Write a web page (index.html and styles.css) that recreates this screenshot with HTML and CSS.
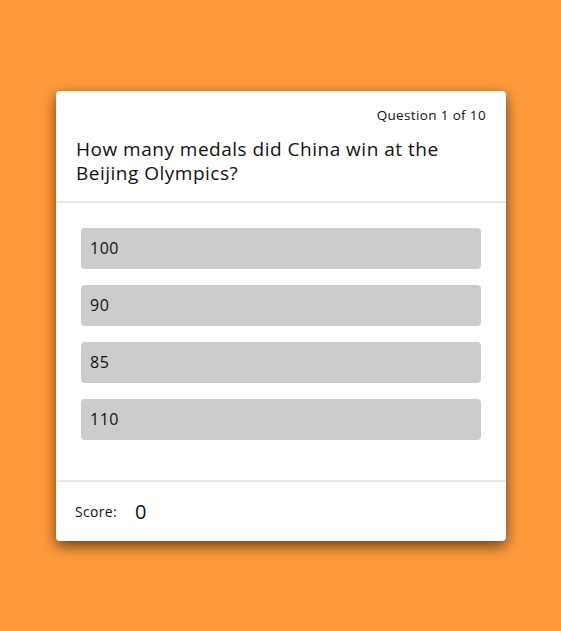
FILE: index.html
```
<!DOCTYPE html>
<html lang="en">
<head>
<meta charset="utf-8">
<title>Quiz</title>
<link rel="stylesheet" href="styles.css">
</head>
<body>
<main class="page">
  <section class="quiz">
    <header class="quiz-head">
      <div class="counter">Question 1 of 10</div>
      <h1 class="question">How many medals did China win at the Beijing Olympics?</h1>
    </header>
    <div class="answers">
      <button class="answer">100</button>
      <button class="answer">90</button>
      <button class="answer">85</button>
      <button class="answer">110</button>
    </div>
    <footer class="quiz-foot">
      <span class="score-label">Score:</span>
      <span class="score-value">0</span>
    </footer>
  </section>
</main>
</body>
</html>
```
FILE: styles.css
```
* { box-sizing: border-box; }
html, body { margin: 0; height: 100%; }
body {
  background: #fe9a3b;
  font-family: "Open Sans", "Noto Sans", sans-serif;
  color: #111;
}
.page {
  height: 100%;
  display: flex;
  align-items: center;
  justify-content: center;
  padding-left: 1px;
}
.quiz {
  width: 450px;
  height: 450px;
  background: #fff;
  border-radius: 4px;
  box-shadow: 0 5px 14px rgba(0, 0, 0, 0.6);
  display: flex;
  flex-direction: column;
}
.quiz-head {
  padding: 14px 20px 16px 20px;
  border-bottom: 2px solid #e8e8e8;
}
.counter {
  text-align: right;
  font-size: 13.5px;
  line-height: 20px;
  letter-spacing: 0.35px;
}
.question {
  margin: 12px 0 0 0;
  font-size: 19px;
  font-weight: 400;
  line-height: 24px;
  letter-spacing: 0.5px;
}
.answers {
  flex: 1;
  display: flex;
  flex-direction: column;
  gap: 16px;
  padding: 25px 25px 0 25px;
  border-bottom: 2px solid #e8e8e8;
}
.answer {
  height: 41px;
  border: none;
  border-radius: 4px;
  background: #cccccc;
  font-family: inherit;
  font-size: 16px;
  letter-spacing: 0.5px;
  color: #111;
  text-align: left;
  padding: 0 9px;
}
.quiz-foot {
  height: 59px;
  display: flex;
  align-items: center;
  padding: 0 19px;
}
.score-label {
  font-size: 14px;
  letter-spacing: 0.3px;
  margin-right: 18px;
}
.score-value {
  font-size: 20px;
}
```
